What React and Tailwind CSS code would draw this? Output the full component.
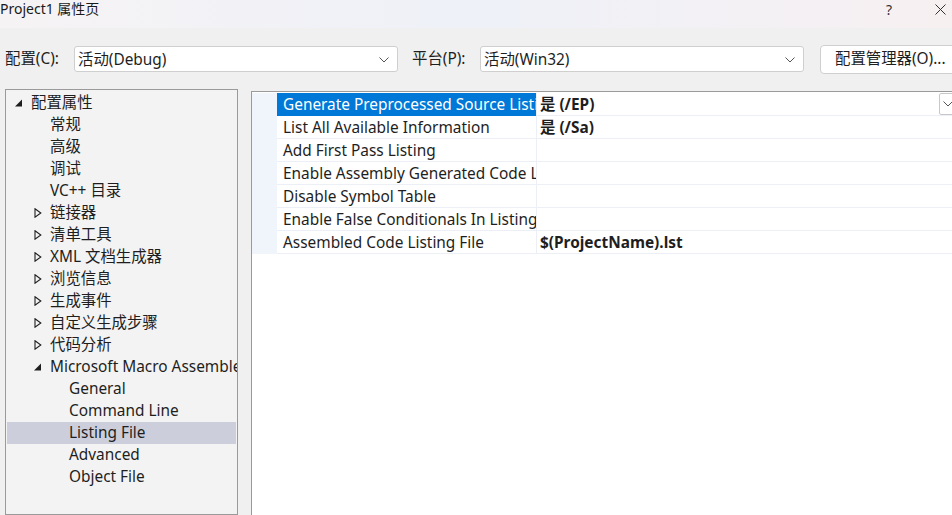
import React from 'react';

const treeItems = [
  { label: '配置属性', level: 0, toggle: 'open' },
  { label: '常规', level: 1 },
  { label: '高级', level: 1 },
  { label: '调试', level: 1 },
  { label: 'VC++ 目录', level: 1 },
  { label: '链接器', level: 1, toggle: 'closed' },
  { label: '清单工具', level: 1, toggle: 'closed' },
  { label: 'XML 文档生成器', level: 1, toggle: 'closed' },
  { label: '浏览信息', level: 1, toggle: 'closed' },
  { label: '生成事件', level: 1, toggle: 'closed' },
  { label: '自定义生成步骤', level: 1, toggle: 'closed' },
  { label: '代码分析', level: 1, toggle: 'closed' },
  { label: 'Microsoft Macro Assembler', level: 1, toggle: 'open' },
  { label: 'General', level: 2 },
  { label: 'Command Line', level: 2 },
  { label: 'Listing File', level: 2, selected: true },
  { label: 'Advanced', level: 2 },
  { label: 'Object File', level: 2 },
];

const props = [
  { name: 'Generate Preprocessed Source Listing', value: '是 (/EP)', selected: true },
  { name: 'List All Available Information', value: '是 (/Sa)' },
  { name: 'Add First Pass Listing', value: '' },
  { name: 'Enable Assembly Generated Code Listing', value: '' },
  { name: 'Disable Symbol Table', value: '' },
  { name: 'Enable False Conditionals In Listing', value: '' },
  { name: 'Assembled Code Listing File', value: '$(ProjectName).lst' },
];

const Chevron = ({ className = '' }) => (
  <svg className={className} width="10" height="6" viewBox="0 0 10 6" fill="none">
    <path d="M0.5 0.5 L5 5 L9.5 0.5" stroke="#555" strokeWidth="1" />
  </svg>
);

const Toggle = ({ kind }) => {
  if (kind === 'open') {
    return (
      <svg width="8" height="8" viewBox="0 0 8 8">
        <path d="M7 0.5 L7 7.5 L0 7.5 Z" fill="#1e1e1e" />
      </svg>
    );
  }
  return (
    <svg width="8" height="10" viewBox="0 0 8 10">
      <path d="M1 0.8 L6.8 5 L1 9.2 Z" fill="none" stroke="#1e1e1e" strokeWidth="1.1" />
    </svg>
  );
};

const Combo = ({ text }) => (
  <div className="w-[324px] h-[26px] shrink-0 bg-white border border-[#cfcfcf] rounded-[3px] flex items-center pl-[3px] pr-[8px] pt-[1px]">
    <span className="flex-1 truncate">{text}</span>
    <Chevron />
  </div>
);

export default function App() {
  return (
    <div
      className="w-[952px] h-[515px] overflow-hidden bg-[#f0f0f0] flex flex-col text-[15.4px] text-[#1e1e1e]"
      style={{ fontFamily: '"Noto Sans", "Noto Sans CJK SC", sans-serif' }}
    >
      {/* title bar */}
      <div className="h-[28px] shrink-0 flex items-start bg-gradient-to-r from-[#f6f3f4] via-[#eef1f8] to-[#f7f0f1]">
        <span className="text-[14px] leading-[18px] text-[#1a1a1a]">Project1 属性页</span>
        <span className="ml-auto mr-[43px] text-[14px] leading-[20px] text-[#333]">?</span>
        <svg className="mr-[6px] mt-[4px]" width="11" height="11" viewBox="0 0 11 11">
          <path d="M0.5 0.5 L10.5 10.5 M10.5 0.5 L0.5 10.5" stroke="#333" strokeWidth="1" />
        </svg>
      </div>

      {/* configuration toolbar */}
      <div className="h-[61px] shrink-0 flex items-center pl-[5px] pt-[1px]">
        <span className="w-[69px] shrink-0">配置(C):</span>
        <Combo text="活动(Debug)" />
        <span className="ml-[14px] w-[68px] shrink-0">平台(P):</span>
        <Combo text="活动(Win32)" />
        <button className="ml-[16px] w-[150px] h-[29px] shrink-0 bg-white border border-[#cfcfcf] rounded-[4px] text-left pl-[14px]">
          配置管理器(O)...
        </button>
      </div>

      {/* body */}
      <div className="flex flex-1 min-h-0 pl-[5px]">
        {/* category tree */}
        <div className="w-[233px] shrink-0 border border-[#9a9a9a] bg-[#f3f3f3] pt-[2px] px-[1px] overflow-hidden">
          {treeItems.map((item, i) => (
            <div
              key={i}
              className={`h-[22px] flex items-center whitespace-nowrap ${item.selected ? 'bg-[#cccedb]' : ''}`}
              style={{ paddingLeft: 8 + item.level * 19 }}
            >
              <span className="w-[16px] shrink-0 flex items-center">
                {item.toggle && <Toggle kind={item.toggle} />}
              </span>
              <span>{item.label}</span>
            </div>
          ))}
        </div>

        {/* property grid */}
        <div className="ml-[13px] mt-[2px] w-[706px] shrink-0 border-l border-t border-[#9a9a9a] bg-white pt-[1px]">
          {props.map((p, i) => (
            <div key={i} className="h-[23px] flex">
              <div className="w-[25px] shrink-0 bg-[#f0f4fb]" />
              <div
                className={`w-[259px] shrink-0 pl-[6px] pt-[1px] leading-[21px] whitespace-nowrap overflow-hidden border-b ${
                  p.selected ? 'bg-[#0078d7] text-white border-[#0078d7]' : 'border-[#eceff5]'
                }`}
              >
                {p.name}
              </div>
              <div className="flex-1 flex items-start border-l border-b border-[#eceff5] pl-[3px]">
                <span className="font-bold pt-[1px] leading-[21px] whitespace-nowrap">{p.value}</span>
                {p.selected && (
                  <div className="ml-auto w-[18px] h-[22px] border border-[#c8c8c8] rounded-[2px] bg-white flex items-center justify-center">
                    <Chevron />
                  </div>
                )}
              </div>
            </div>
          ))}
        </div>
      </div>
    </div>
  );
}
